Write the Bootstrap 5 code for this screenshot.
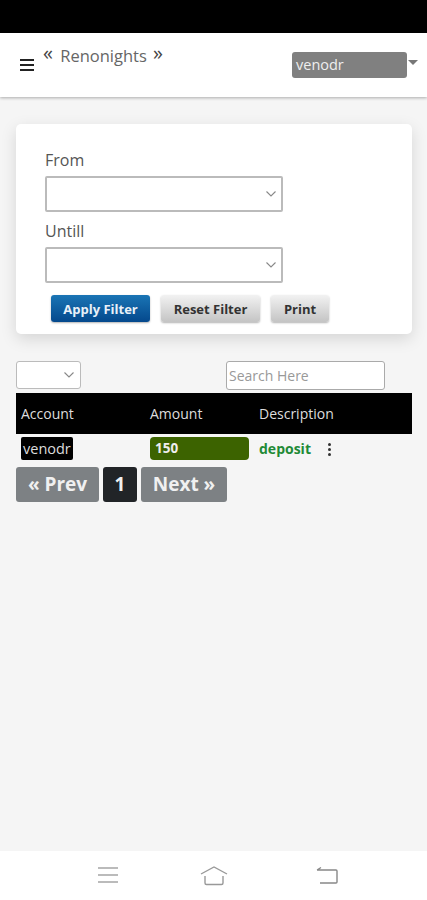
<!DOCTYPE html>
<html lang="en">
<head>
  <meta charset="UTF-8">
  <meta name="viewport" content="width=device-width, initial-scale=1.0">
  <title>Renonights</title>
  <link href="https://cdn.jsdelivr.net/npm/bootstrap@5.3.0/dist/css/bootstrap.min.css" rel="stylesheet">
  <style>
    html, body { height: 900px; overflow: hidden; }
    body { background: #f5f5f5; font-family: "Open Sans", "Liberation Sans", sans-serif; color: #444; }
    .page-wrap { height: 900px; }
    .status-strip { height: 33px; background: #000; }
    .top-bar { height: 64px; background: #fff; box-shadow: 0 1px 3px rgba(0,0,0,.3); padding: 0 9px 0 20px; }
    .brand-text { font-size: 16.5px; line-height: 22px; color: #666; margin: 12px 0 0 9px; }
    .brand-arrows { font-size: 20px; line-height: 0; color: #444; position: relative; top: -2px; }
    .brand-left { margin-right: 3px; }
    .brand-right { margin-left: 2px; }
    .burger { margin-top: 25px; }
    .user-pick { width: 115px; height: 26px; margin-top: 19px; background: #808080; color: #eee; border-radius: 3px; font-size: 14.5px; line-height: 25px; padding-left: 4px; }
    .pick-caret { width: 0; height: 0; border-left: 5px solid transparent; border-right: 5px solid transparent; border-top: 5px solid #777; margin: 27px 0 0 1px; }
    .filter-box { margin: 27px 15px 0 16px; height: 210px; padding: 25px 29px 0; border: 0; border-radius: 5px; box-shadow: 0 5px 16px rgba(0,0,0,.13); }
    .filter-label { font-size: 16px; line-height: 22px; color: #555; margin-bottom: 5px; }
    .date-pick { width: 238px; height: 36px; background: #fff; border: 2px solid #bbb; border-radius: 2px; margin-bottom: 8px; padding-right: 5px; }
    .btn-row { gap: 11px; margin: 4px 0 0 6px; }
    .fbtn { height: 27px; width: 99px; padding: 0; font-size: 13px; line-height: 26px; font-weight: 700; border: 0; border-radius: 3px; color: #333; background: linear-gradient(#f2f2f2, #c4c4c4); box-shadow: 0 1px 2px rgba(0,0,0,.3); }
    .fbtn-blue { color: #e8f0f8; background: linear-gradient(#1a75b5, #04488c); }
    .fbtn-print { width: 58px; }
    .tool-row { margin: 27px 42px 0 16px; height: 29px; }
    .size-pick { width: 65px; height: 28px; background: #fff; border: 1px solid #bbb; border-radius: 3px; padding-right: 6px; }
    .search-box { width: 159px; height: 29px; padding: 0 2px; font-size: 14px; line-height: 27px; color: #999; background: #fff; border: 1px solid #aaa; border-radius: 3px; }
    .search-box::placeholder { color: #999; }
    .data-grid { margin: 3px 15px 0 16px; width: 396px; }
    .grid-head { height: 41px; background: #000; color: #ddd; font-size: 14px; line-height: 41px; }
    .grid-row { height: 33px; }
    .col-acct { width: 134px; padding-left: 5px; }
    .col-amt { width: 109px; }
    .acct-tag { background: #000; color: #ddd; font-size: 14.5px; line-height: 23px; height: 23px; padding: 0 2px; border-radius: 2px; margin-top: 3px; }
    .amt-tag { width: 99px; height: 23px; background: #3c6300; color: #eee; font-size: 13.5px; font-weight: 700; line-height: 23px; padding-left: 5px; border-radius: 4px; margin-top: 3px; }
    .desc-text { color: #1f8a36; font-size: 14px; font-weight: 700; line-height: 29px; }
    .dots { gap: 2px; margin: 9px 0 0 17px; }
    .dots span { width: 3px; height: 3px; background: #333; border-radius: 50%; }
    .pager { margin: 0 0 0 16px; gap: 4px; }
    .pg-btn { height: 35px; font-size: 19px; font-weight: 700; line-height: 34px; color: #f0f0f0; background: #7d8184; border-radius: 3px; text-align: center; }
    .pg-prev { width: 83px; }
    .pg-cur { width: 34px; background: #212427; }
    .pg-next { width: 86px; }
    .bottom-bar { margin-top: auto; height: 49px; background: #fff; padding-top: 13px; }
    .bottom-bar svg { display: block; }
    .nav-slot { margin-left: 98px; }
    .nav-home { margin-left: 82px; }
    .nav-back { margin-left: 88px; }
  </style>
</head>
<body>
  <div class="page-wrap d-flex flex-column">
    <div class="status-strip"></div>

    <div class="top-bar d-flex">
      <svg class="burger" width="14" height="14" viewBox="0 0 14 14"><path d="M0 2h14M0 7h14M0 12h14" stroke="#222" stroke-width="2"/></svg>
      <div class="brand-text"><span class="brand-arrows brand-left">&laquo;</span> Renonights <span class="brand-arrows brand-right">&raquo;</span></div>
      <div class="user-pick ms-auto">venodr</div>
      <div class="pick-caret"></div>
    </div>

    <div class="card filter-box">
      <div class="filter-label">From</div>
      <div class="date-pick d-flex align-items-center justify-content-end">
        <svg width="10" height="6" viewBox="0 0 10 6"><path d="M.5.5L5 5 9.500.5" fill="none" stroke="#888" stroke-width="1.100"/></svg>
      </div>
      <div class="filter-label">Untill</div>
      <div class="date-pick d-flex align-items-center justify-content-end">
        <svg width="10" height="6" viewBox="0 0 10 6"><path d="M.5.5L5 5 9.500.5" fill="none" stroke="#888" stroke-width="1.100"/></svg>
      </div>
      <div class="btn-row d-flex">
        <button class="btn fbtn fbtn-blue">Apply Filter</button>
        <button class="btn fbtn">Reset Filter</button>
        <button class="btn fbtn fbtn-print">Print</button>
      </div>
    </div>

    <div class="tool-row d-flex justify-content-between">
      <div class="size-pick d-flex align-items-center justify-content-end">
        <svg width="10" height="6" viewBox="0 0 10 6"><path d="M.5.5L5 5 9.500.5" fill="none" stroke="#888" stroke-width="1.100"/></svg>
      </div>
      <input class="search-box" type="text" placeholder="Search Here">
    </div>

    <div class="data-grid">
      <div class="grid-head d-flex">
        <div class="col-acct">Account</div>
        <div class="col-amt">Amount</div>
        <div>Description</div>
      </div>
      <div class="grid-row d-flex">
        <div class="col-acct"><span class="acct-tag d-inline-block">venodr</span></div>
        <div class="col-amt"><div class="amt-tag">150</div></div>
        <div class="desc-text">deposit</div>
        <div class="dots d-flex flex-column"><span></span><span></span><span></span></div>
      </div>
    </div>

    <div class="pager d-flex">
      <div class="pg-btn pg-prev">&laquo; Prev</div>
      <div class="pg-btn pg-cur">1</div>
      <div class="pg-btn pg-next">Next &raquo;</div>
    </div>

    <div class="bottom-bar d-flex">
      <div class="nav-slot d-flex">
        <svg width="20" height="20" viewBox="0 0 20 20"><path d="M0 4h20M0 11h20M0 18h20" stroke="#bbb" stroke-width="2"/></svg>
        <svg class="nav-home" width="28" height="22" viewBox="0 0 28 22"><path d="M1 10L14 3l13 7M5 12v7q0 1.500 1.500 1.500h15q1.500 0 1.500-1.500v-7" fill="none" stroke="#999" stroke-width="1.400"/></svg>
        <svg class="nav-back" width="22" height="22" viewBox="0 0 22 22"><path d="M1 6h19q1 0 1 1v11q0 1-1 1H4M1 6l4-2.500" fill="none" stroke="#888" stroke-width="1.400"/></svg>
      </div>
    </div>
  </div>
  <script src="https://cdn.jsdelivr.net/npm/bootstrap@5.3.0/dist/js/bootstrap.bundle.min.js"></script>
</body>
</html>
